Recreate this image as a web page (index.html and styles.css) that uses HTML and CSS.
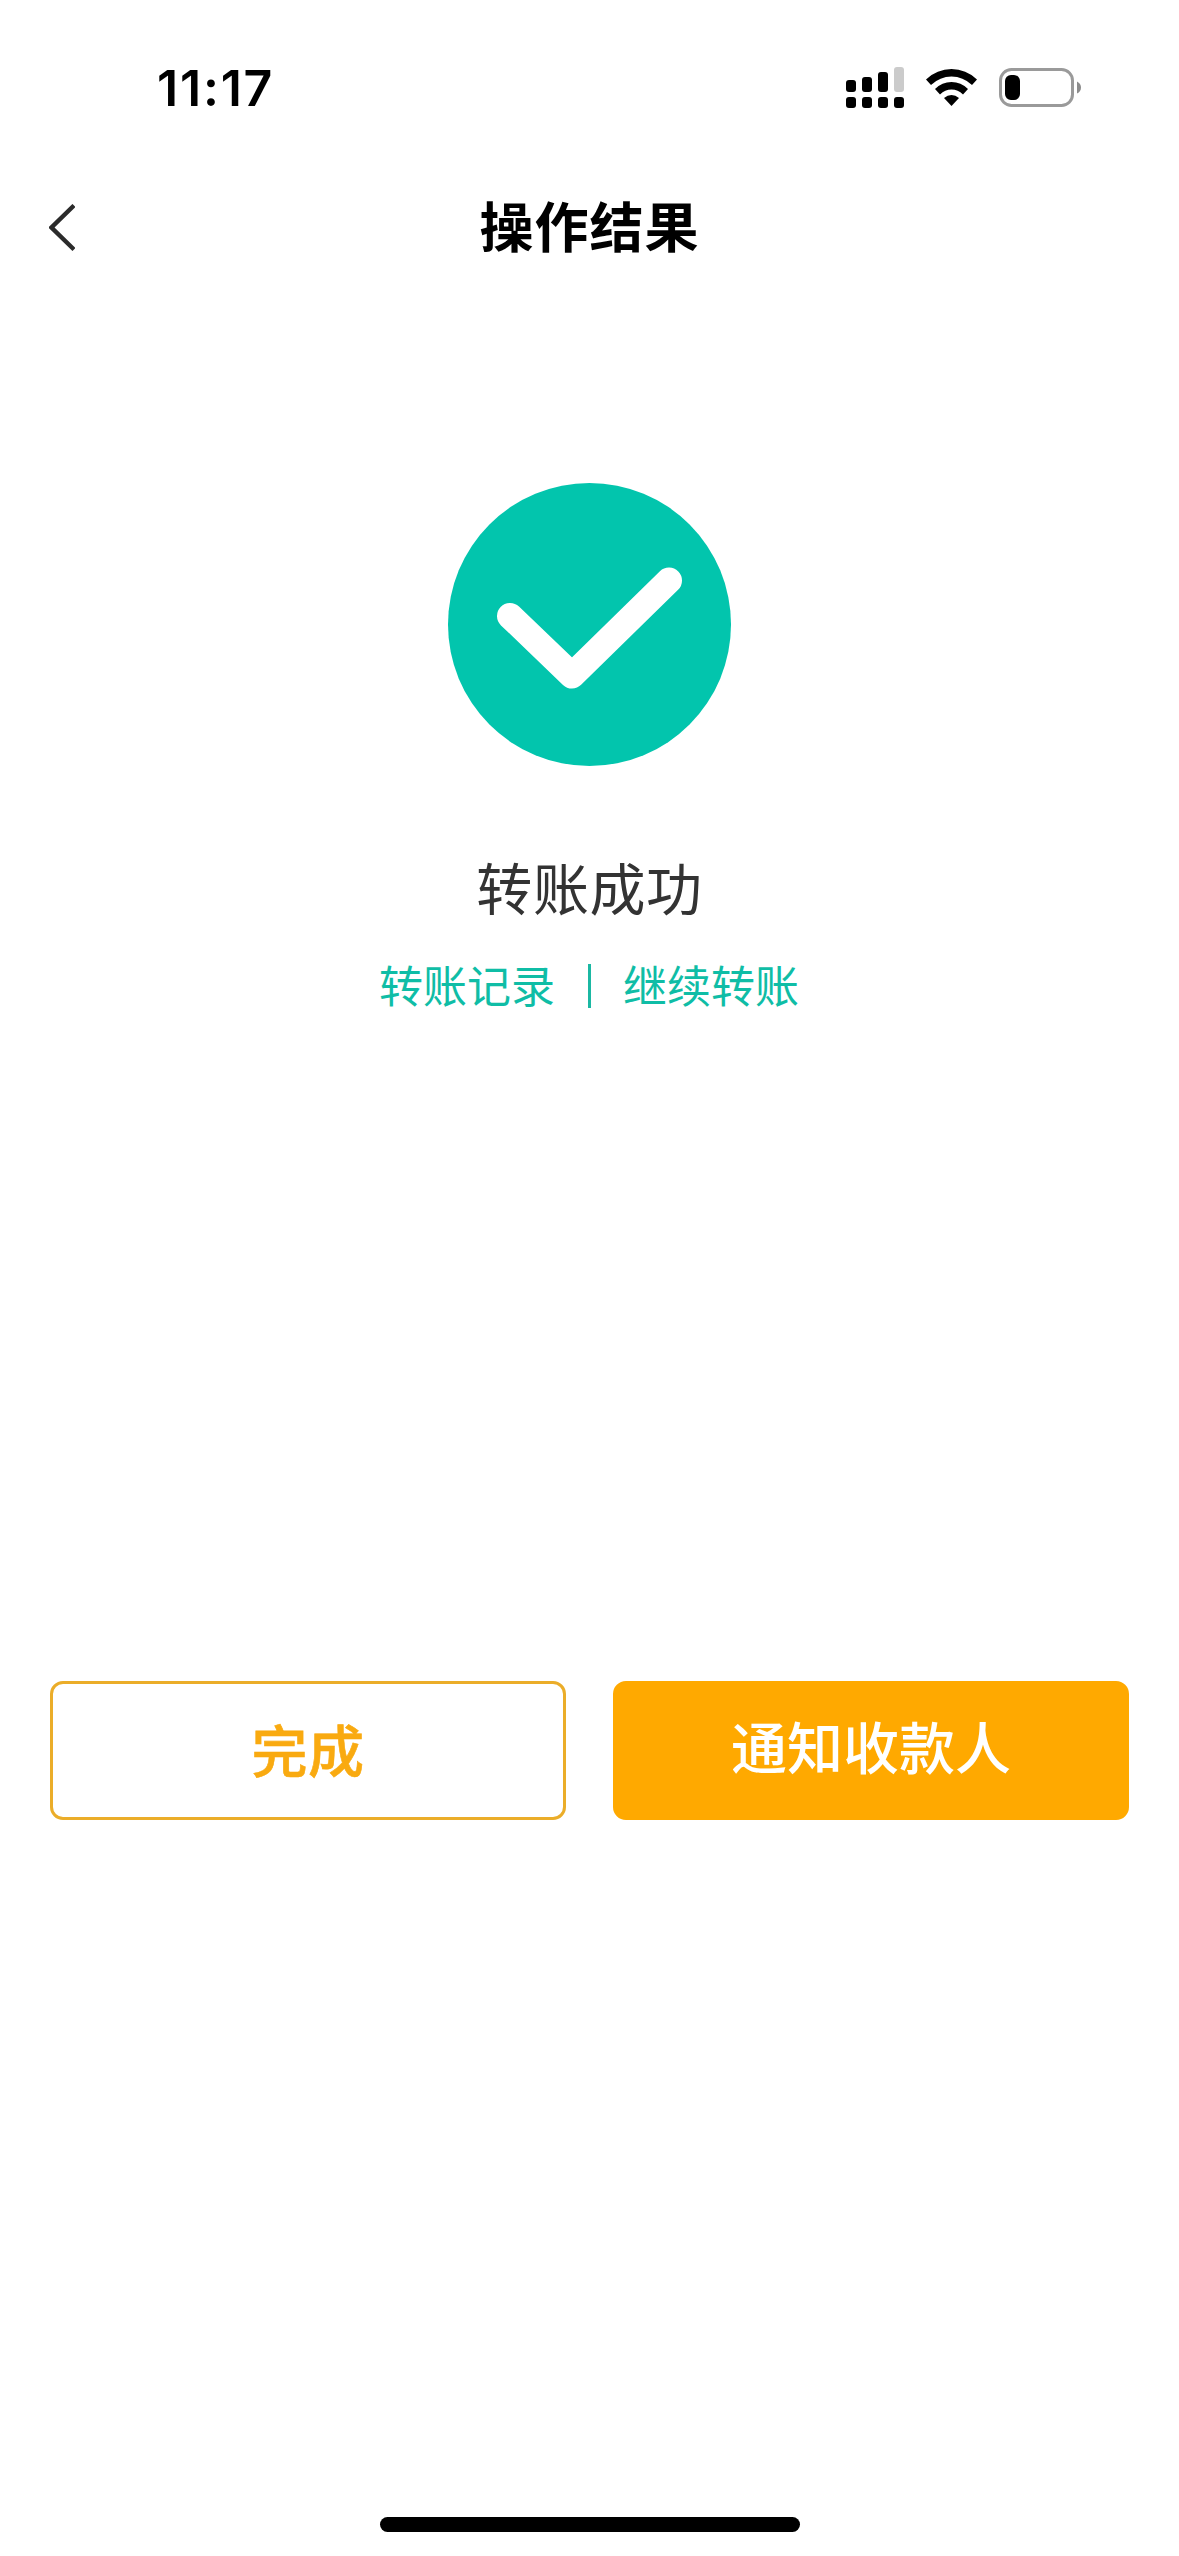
FILE: index.html
```html
<!DOCTYPE html>
<html lang="zh-CN">
<head>
<meta charset="utf-8">
<title>操作结果</title>
<link rel="stylesheet" href="styles.css">
</head>
<body>
<div class="screen">
  <header class="status">
    <span class="time">11:17</span>
    <div class="indicators">
      <svg class="signal" width="58" height="42" viewBox="0 0 58 42">
        <rect x="0" y="13" width="10" height="12" rx="3"/>
        <rect x="16" y="10" width="10" height="15" rx="3"/>
        <rect x="32" y="5" width="10" height="20" rx="3"/>
        <rect x="48" y="0" width="10" height="25" rx="3" fill="#cbcbcb"/>
        <rect x="0" y="30" width="10" height="11" rx="3"/>
        <rect x="16" y="30" width="10" height="11" rx="3"/>
        <rect x="32" y="30" width="10" height="11" rx="3"/>
        <rect x="48" y="30" width="10" height="11" rx="3"/>
      </svg>
      <svg class="wifi" width="51" height="38" viewBox="0 0 51 38">
        <path d="M0 10.5Q11 0 25.500 0T51 10.500L46 16Q37 7.500 25.500 7.500T5 16Z"/>
        <path d="M9 20Q16 13 25.500 13T42 20L37 25.500Q32 20.500 25.500 20.500T14 25.500Z"/>
        <path d="M18 29Q21.500 26 25.500 26T33 29L25.500 37Z"/>
      </svg>
      <svg class="battery" width="84" height="40" viewBox="0 0 84 40">
        <rect x="1.500" y="1.500" width="72" height="36" rx="11" fill="none" stroke="#9a9a9a" stroke-width="3"/>
        <rect x="6" y="7" width="15" height="25" rx="6"/>
        <path d="M78 13.500Q82 15.500 82 19.500T78 25.500Z" fill="#8c8c8c"/>
      </svg>
    </div>
  </header>
  <nav class="navbar">
    <svg class="back" width="26" height="48" viewBox="0 0 26 48">
      <path d="M25 1.500L2.500 23.500L25 45.500" fill="none" stroke="#2b2b2b" stroke-width="4.400"/>
    </svg>
    <h1 class="title">操作结果</h1>
  </nav>
  <main class="result">
    <svg class="success" width="283" height="283" viewBox="0 0 283 283">
      <circle cx="141.500" cy="141.500" r="141.500" fill="#02c5ad"/>
      <path d="M62 133L124 192.500L221 97.500" fill="none" stroke="#fff" stroke-width="26" stroke-linecap="round" stroke-linejoin="round"/>
    </svg>
    <p class="message">转账成功</p>
    <div class="links">
      <a class="link">转账记录</a>
      <span class="divider"></span>
      <a class="link">继续转账</a>
    </div>
  </main>
  <div class="actions">
    <button class="btn outline">完成</button>
    <button class="btn solid">通知收款人</button>
  </div>
  <footer class="home"><div class="home-bar"></div></footer>
</div>
</body>
</html>
```
FILE: styles.css
```css
* { box-sizing: border-box; margin: 0; padding: 0; }
body { background: #fff; font-family: "Noto Sans CJK SC", sans-serif; }
.screen { width: 1179px; height: 2556px; display: flex; flex-direction: column; overflow: hidden; }
svg { display: block; }

.status { height: 176px; padding: 67px 96px 0 157px; display: flex; justify-content: space-between; align-items: flex-start; }
.time { font: 600 50px/42px Inter, sans-serif; letter-spacing: 1.8px; color: #000; }
.indicators { display: flex; align-items: flex-start; }
.wifi { margin: 2px 0 0 22px; }
.battery { margin: 1px 0 0 22px; }

.navbar { height: 104px; padding: 0 49px; display: grid; grid-template-columns: 26px 1fr 26px; align-items: center; }
.title { text-align: center; font-size: 54px; font-weight: 700; line-height: 97px; padding-bottom: 7px; letter-spacing: 1px; color: #000; }

.result { height: 1401px; padding-top: 203px; display: flex; flex-direction: column; align-items: center; }
.message { margin-top: 80px; font-size: 56px; line-height: 80px; letter-spacing: .6px; color: #333; }
.links { margin-top: 28px; height: 64px; display: flex; align-items: center; gap: 33px; }
.link { font-size: 44px; line-height: 60px; padding-bottom: 4px; color: #0fbda6; }
.link:first-child { margin-left: -1px; }
.link:last-child { margin-left: -1px; }
.divider { width: 3px; height: 44px; background: #1bb8a3; }

.actions { padding: 0 50px; display: grid; grid-template-columns: 1fr 1fr; gap: 47px; }
.btn { height: 139px; border: 3px solid #ebad29; border-radius: 13px; font: 500 56px/80px "Noto Sans CJK SC", sans-serif; }
.outline { background: #fff; color: #f9aa10; padding-bottom: 6px; letter-spacing: .5px; -webkit-text-stroke: .6px #f9aa10; }
.solid { background: #ffa900; border-color: #ffa900; color: #fff; padding-bottom: 12px; }

.home { margin-top: auto; padding-bottom: 24px; display: flex; justify-content: center; }
.home-bar { width: 420px; height: 15px; border-radius: 8px; background: #000; }
```
